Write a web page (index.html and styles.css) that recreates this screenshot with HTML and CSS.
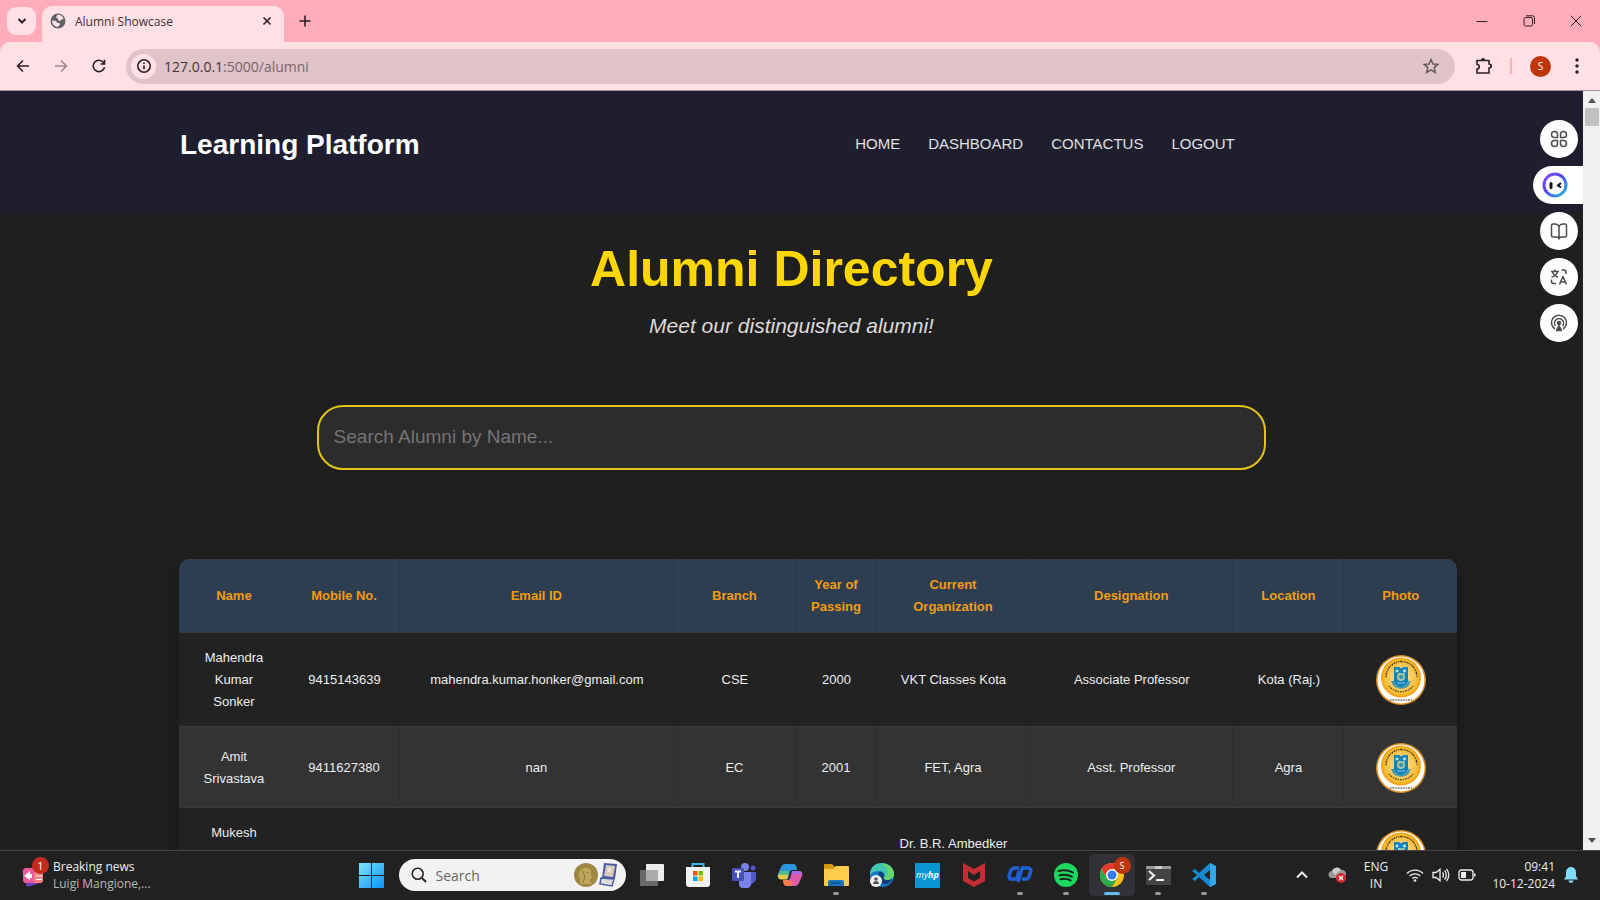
FILE: index.html
```html
<!DOCTYPE html>
<html lang="en">
<head>
<meta charset="utf-8">
<title>Alumni Showcase</title>
<link rel="stylesheet" href="styles.css">
</head>
<body>
<svg class="defs" aria-hidden="true">
  <defs>
    <radialGradient id="gold" cx=".5" cy=".5" r=".5"><stop offset="0" stop-color="#f8e3a4"/><stop offset=".6" stop-color="#f7cd68"/><stop offset="1" stop-color="#f9b41c"/></radialGradient>
    <linearGradient id="win" x1="0" y1="0" x2="1" y2="1"><stop offset="0" stop-color="#7fe6ff"/><stop offset="1" stop-color="#0a91f5"/></linearGradient>
    <linearGradient id="ring" x1="0" y1="0" x2="1" y2="1"><stop offset="0" stop-color="#8a4df0"/><stop offset=".45" stop-color="#5146e8"/><stop offset="1" stop-color="#27c0e6"/></linearGradient>
    <symbol id="seal" viewBox="0 0 50 50">
      <circle cx="25" cy="25" r="25" fill="#d98d20"/>
      <circle cx="25" cy="25" r="23.5" fill="#fff"/>
      <circle cx="25" cy="22.5" r="20" fill="#eda31c"/>
      <circle cx="25" cy="22.5" r="18.5" fill="url(#gold)"/>
      <path d="M10 22a15.500 15.500 0 0 1 31 0" fill="none" stroke="#3f3620" stroke-width="1.300" stroke-dasharray="1.500 .8 2 .6 1 .9"/>
      <path d="M13 31a15.500 15.500 0 0 0 24 0" fill="none" stroke="#5d4a20" stroke-width="1.300" stroke-dasharray="1.200 1 2 1"/>
      <path d="M18 12h5l2 1.500 2-1.500h5v14c0 3-3 5-7 6.500-4-1.500-7-3.500-7-6.500z" fill="#1283bd"/>
      <path d="M16.500 26c1 5 5 6.500 8.500 6.500s7.500-1.500 8.500-6.500" fill="none" stroke="#2a91b9" stroke-width="2.500" stroke-dasharray="2 .5"/>
      <circle cx="25" cy="22" r="4" fill="#9bc9a6"/><circle cx="25" cy="22" r="2" fill="#338fae"/>
      <path d="M20 15h2v2h-2zM27.500 15h2v2h-2zM22 18.500h2M27 18.500h2M21 28h8" fill="#ccebeb" stroke="#a7dae2" stroke-width=".8"/>
      <path d="M14 45h22" stroke="#777" stroke-width="1.300" stroke-dasharray="1.500 .8 2 .9"/>
    </symbol>
  </defs>
</svg>

<div class="tabstrip">
  <button class="tab-search" aria-label="Search tabs"><svg width="12" height="12" viewBox="0 0 12 12"><path d="M2.500 4 6 7.500 9.500 4" class="ink2"/></svg></button>
  <div class="tab">
    <svg width="16" height="16" viewBox="0 0 16 16"><circle cx="8" cy="8" r="7.500" fill="#5f6368"/><path d="M7 2c3-1 6 1 6.500 4l-2 .5-1.500 1.500-2-1-.5-2L6 4.500zM2 7.500l4 .5 1.500 2h2l.5 1.500-2 2.500C4.500 14 2 11 2 7.500z" fill="#fde0e5"/></svg>
    <span class="tab-title">Alumni Showcase</span>
    <button class="plain" aria-label="Close tab"><svg width="12" height="12" viewBox="0 0 12 12"><path d="m2.500 2.500 7 7M9.500 2.500l-7 7" class="ink15"/></svg></button>
  </div>
  <button class="plain new-tab" aria-label="New tab"><svg width="12" height="12" viewBox="0 0 12 12"><path d="M6 .5v11M.5 6h11" class="ink15"/></svg></button>
  <div class="window-controls">
    <button class="plain" aria-label="Minimize"><svg width="12" height="12" viewBox="0 0 12 12"><path d="M.5 6.500h11" class="ink1"/></svg></button>
    <button class="plain" aria-label="Restore"><svg width="12" height="12" viewBox="0 0 12 12"><rect x="1" y="2.500" width="8.500" height="8.500" rx="1.500" class="ink1"/><path d="M3 .8h6.500a2 2 0 0 1 2 2V9" class="ink1"/></svg></button>
    <button class="plain" aria-label="Close"><svg width="12" height="12" viewBox="0 0 12 12"><path d="m.7.7 10.600 10.600M11.300.7.7 11.300" class="ink1"/></svg></button>
  </div>
</div>

<div class="toolbar">
  <button class="plain" aria-label="Back"><svg width="14" height="14" viewBox="0 0 14 14"><path d="M13 7H1.500M7 1.500 1.500 7 7 12.500" class="ink15"/></svg></button>
  <button class="plain faded" aria-label="Forward"><svg width="14" height="14" viewBox="0 0 14 14"><path d="M1 7h11.500M7 1.500 12.500 7 7 12.500" class="ink15"/></svg></button>
  <button class="plain" aria-label="Reload"><svg width="14" height="14" viewBox="0 0 14 14"><path d="M12.500 8.200A5.700 5.700 0 1 1 11.500 3.500L12.500 5M12.500.7V5H8.500" class="ink15"/></svg></button>
  <div class="omnibox">
    <button class="site-info" aria-label="Site information"><svg width="14" height="14" viewBox="0 0 14 14"><circle cx="7" cy="7" r="6.200" class="ink15"/><path d="M7 6.300v4M7 3.500v1.500" class="ink15"/></svg></button>
    <div class="url">127.0.0.1<span>:5000/alumni</span></div>
    <button class="plain" aria-label="Bookmark"><svg width="16" height="16" viewBox="0 0 16 16"><path d="m8 1.500 2 4.500 4.900.4-3.700 3.200 1.100 4.800L8 11.900l-4.300 2.500 1.100-4.800L1.100 6.400 6 6z" class="star"/></svg></button>
  </div>
  <button class="plain" aria-label="Extensions"><svg width="18" height="18" viewBox="0 0 18 18"><path d="M2 3.500h12v3.500a1.800 1.800 0 0 1 0 4V16H2v-4a2 2 0 0 0 0-4.500z" class="ink15"/><path d="M6 3a2 2 0 0 1 4 0zM15 7a2 2 0 0 1 0 4z" fill="#2c2023"/></svg></button>
  <span class="divider"></span>
  <button class="avatar" aria-label="Profile">S</button>
  <button class="plain" aria-label="Menu"><svg width="4" height="16" viewBox="0 0 4 16" fill="#2c2023"><circle cx="2" cy="2" r="1.700"/><circle cx="2" cy="8" r="1.700"/><circle cx="2" cy="14" r="1.700"/></svg></button>
</div>

<div class="viewport">
  <div class="page">
    <header class="site-header">
      <div class="brand">Learning Platform</div>
      <nav class="site-nav"><a href="#">HOME</a><a href="#">DASHBOARD</a><a href="#">CONTACTUS</a><a href="#">LOGOUT</a></nav>
    </header>
    <main>
      <h1>Alumni Directory</h1>
      <p class="tagline">Meet our distinguished alumni!</p>
      <input class="search" type="text" aria-label="Search alumni by name" placeholder="Search Alumni by Name...">
      <div class="table-wrap">
      <table class="alumni">
        <colgroup><col class="c-name"><col class="c-mobile"><col class="c-email"><col class="c-branch"><col class="c-year"><col class="c-org"><col class="c-role"><col class="c-place"><col class="c-photo"></colgroup>
        <thead><tr><th>Name</th><th>Mobile No.</th><th>Email ID</th><th>Branch</th><th>Year of Passing</th><th>Current<br>Organization</th><th>Designation</th><th>Location</th><th>Photo</th></tr></thead>
        <tbody>
          <tr><td>Mahendra Kumar Sonker</td><td>9415143639</td><td>mahendra.kumar.honker@gmail.com</td><td>CSE</td><td>2000</td><td>VKT Classes Kota</td><td>Associate Professor</td><td>Kota (Raj.)</td><td><svg class="photo"><use href="#seal"/></svg></td></tr>
          <tr><td>Amit Srivastava</td><td>9411627380</td><td>nan</td><td>EC</td><td>2001</td><td>FET, Agra</td><td>Asst. Professor</td><td>Agra</td><td><svg class="photo"><use href="#seal"/></svg></td></tr>
          <tr><td>Mukesh Kumar Sharma</td><td>9411627271</td><td>mukeshcs2@gmail.com</td><td>EC</td><td>2002</td><td>Dr. B.R. Ambedker University</td><td>Asstt. Prof.</td><td>Agra</td><td><svg class="photo"><use href="#seal"/></svg></td></tr>
        </tbody>
      </table>
      </div>
    </main>
    <aside class="assistant">
      <button aria-label="Apps"><svg width="18" height="18" viewBox="0 0 18 18" class="tool"><path d="M4.500 1.500A3 3 0 0 1 7.500 4.500V7.500H4.500a3 3 0 0 1 0-6zM13.500 1.500a3 3 0 0 1 0 6H10.500V4.500a3 3 0 0 1 3-3zM4.500 10.500H7.500v3a3 3 0 1 1-3-3zM10.500 10.500h3a3 3 0 1 1-3 3z"/></svg></button>
      <button class="bot" aria-label="Assistant"><svg width="26" height="26" viewBox="0 0 26 26"><circle cx="13" cy="13" r="11" fill="#fff" stroke="url(#ring)" stroke-width="3"/><path d="M9 11.500v4" stroke="#111" stroke-width="3" stroke-linecap="round"/><path d="m19 11-3 2.500 3 2" fill="none" stroke="#111" stroke-width="2"/></svg></button>
      <button aria-label="Read"><svg width="18" height="18" viewBox="0 0 18 18" class="tool"><path d="M9 4.500C8 2.500 7 2 5 2H3A1.500 1.500 0 0 0 1.500 3.500v10A1.500 1.500 0 0 0 3 15h3c1.500 0 2.300.3 3 1.200.7-.9 1.500-1.200 3-1.200h3a1.500 1.500 0 0 0 1.500-1.500v-10A1.500 1.500 0 0 0 15 2h-2c-2 0-3 .5-4 2.500zv13"/></svg></button>
      <button aria-label="Translate"><svg width="18" height="18" viewBox="0 0 18 18" class="tool"><path d="M1 3.500h8M5 1.500v2M7.500 4C6.500 6.500 4 8.500 1.500 9M2.500 4c1 2.500 3.500 4.500 5.500 5M9.500 16.500l3.500-8 3.500 8M10.800 14h4.500M11.500 2h2.500a2 2 0 0 1 2 2v2M1.500 11.500v2a2 2 0 0 0 2 2H6"/></svg></button>
      <button aria-label="Podcast"><svg width="18" height="18" viewBox="0 0 18 18" class="tool"><path d="M5 15a7.500 7.500 0 1 1 8 0M5.500 12a4.500 4.500 0 1 1 7 0"/><circle cx="9" cy="9" r="1.500" fill="#4b4b50"/><path d="M9 11.500 6.500 16.500h5z" fill="#4b4b50"/></svg></button>
    </aside>
  </div>
  <div class="scrollbar">
    <svg width="8" height="5" viewBox="0 0 8 5"><path d="M0 5 4 0l4 5z" fill="#505050"/></svg>
    <div class="thumb"></div>
    <svg width="8" height="5" viewBox="0 0 8 5"><path d="M0 0h8L4 5z" fill="#505050"/></svg>
  </div>
</div>

<footer class="taskbar">
  <div class="widget">
    <svg width="28" height="32" viewBox="0 0 28 32"><path d="m2 12 5 16 13-4-2-12z" fill="#6c43c6"/><rect x="3" y="9" width="20" height="15" rx="3" fill="#ee5c9b"/><path d="M14 9h6a3 3 0 0 1 3 3v9a3 3 0 0 1-3 3h-6z" fill="#f47c80"/><path d="m4 17 6-5v9zM10 15h2v4h-2z" fill="#fff"/><path d="M16 17h6M16 20.500h6" stroke="#fff"/></svg>
    <span class="count">1</span>
    <div class="news"><strong>Breaking news</strong><span>Luigi Mangione,...</span></div>
  </div>
  <div class="apps">
    <button class="start" aria-label="Start"><svg width="25" height="25" viewBox="0 0 25 25"><path d="M0 0h12v12H0zM13 0h12v12H13zM0 13h12v12H0zM13 13h12v12H13z" fill="url(#win)"/></svg></button>
    <label class="task-search">
      <svg width="16" height="16" viewBox="0 0 16 16"><circle cx="6.700" cy="6.700" r="5.500" class="ink15"/><path d="m11 11 4 4" class="ink2"/></svg>
      <input type="text" placeholder="Search" aria-label="Search">
      <svg width="46" height="26" viewBox="0 0 46 26"><circle cx="13" cy="13" r="12" fill="#a08643"/><path d="M7 22c1-4 0-5-1-8 0-6 3-9 7-8 4 0 6 4 5 6l1 4-2 1v3l3 2z" fill="#c0a75c"/><path d="M9 8c2 2 1 4 3 6l-2 7M14 10l2 1" stroke="#88723a" fill="none"/><path d="m31 1 13 1-2 15-13-1z" fill="#4a5aa3"/><path d="m33 3 9 1-2 11-9-1z" fill="#d8cbbd"/><path d="m28 16 13 1-2 7-12-2z" fill="#dfddd8" stroke="#4a5aa3" stroke-width="1.500"/><circle cx="36.500" cy="8" r="2" fill="#eee2d4"/></svg>
    </label>
    <button aria-label="Task view"><svg width="26" height="26" viewBox="0 0 26 26"><rect x="7" y="2" width="18" height="17" rx="1" fill="#eee"/><rect x="1" y="8" width="18" height="16" rx="1" fill="#777" fill-opacity=".85"/><path d="M7 8h12v11H7z" fill="#aaa"/></svg></button>
    <button aria-label="Store"><svg width="26" height="26" viewBox="0 0 26 26"><path d="M7.500 6V2h11v4" fill="none" stroke="#35b6e6" stroke-width="2"/><path d="M1 5h24v17a3 3 0 0 1-3 3H4a3 3 0 0 1-3-3z" fill="#f2f2f2"/><path d="M8 9h4.500v4.500H8z" fill="#f25022"/><path d="M13.500 9H18v4.500h-4.500z" fill="#7fba00"/><path d="M8 14.500h4.500V19H8z" fill="#00a4ef"/><path d="M13.500 14.500H18V19h-4.500z" fill="#ffb900"/></svg></button>
    <button aria-label="Teams"><svg width="26" height="26" viewBox="0 0 26 26"><circle cx="14" cy="5" r="4" fill="#7b83eb"/><circle cx="22" cy="6" r="2.500" fill="#5059c9"/><path d="M18 10h7v7a5 5 0 0 1-7 4z" fill="#5059c9"/><path d="M8 10h12v8a6 6 0 0 1-12 5z" fill="#7b83eb"/><rect x="1" y="6" width="12" height="13" rx="1" fill="#4650b8"/><path d="M4 9.500h6M7 9.500V16" stroke="#fff" stroke-width="1.800"/></svg></button>
    <button aria-label="Copilot"><svg width="26" height="26" viewBox="0 0 26 26"><path d="M8 2h8c2 0 3 1 3.500 3l.5 3h-4c-2 0-3 1-3.500 3L11 17H5c-4 0-5-2-4-5l3-7c1-2 2-3 4-3z" fill="#2a95df"/><path d="M1.500 12h10L10 17.500H5c-3.500 0-4.500-2-3.500-5.500z" fill="#ecc846"/><path d="M3 9h9l-1 4H1.500z" fill="#5abf83"/><path d="M18 24h-8c-2 0-3-1-3.500-3L6 18h4c2 0 3-1 3.500-3L15 9h6c4 0 5 2 4 5l-3 7c-1 2-2 3-4 3z" fill="#de58ad"/><path d="M6 18h5l5 2-1 4h-5c-2 0-3-1-3.500-3z" fill="#f47d4d"/><path d="M15 9h6c3 0 4 1.500 4 3.500l-10-1z" fill="#a86be8"/></svg></button>
    <button class="open" aria-label="File Explorer"><svg width="26" height="26" viewBox="0 0 26 26"><path d="M1 3a1 1 0 0 1 1-1h7l3 3h13v8H1z" fill="#d69b12"/><path d="M1 7h9l3-3h12a1 1 0 0 1 1 1v18a1 1 0 0 1-1 1H2a1 1 0 0 1-1-1z" fill="#fccd4c"/><path d="M5 24v-4a2 2 0 0 1 2-2h12a2 2 0 0 1 2 2v4z" fill="#1876bd"/><path d="M8 21h10" stroke="#0b508c" stroke-width="1.500"/></svg></button>
    <button aria-label="Edge"><svg width="26" height="26" viewBox="0 0 26 26"><circle cx="13" cy="13" r="12" fill="#1479c4"/><path d="M1 11C2 4 7 1 13 1c7 0 12 5 12 11 0 4-3 6-7 6-3 0-4-2-3-3 2-3-1-6-5-6-4 0-7 1-9 4z" fill="#43c5b4"/><path d="M17 2c5 2 8 6 8 10 0 4-3 6-7 6-3 0-4-2-3-3 6 0 5-9-2-13z" fill="#66d76b"/><path d="M10 10c3-1 6 2 5 5-1 1 0 3 3 3 3 0 5-1 6-2-2 4-5 6-8 6-4 0-7-4-7-8z" fill="#123f75"/><circle cx="7" cy="19" r="6" fill="#eee"/><circle cx="7" cy="17" r="1.800" fill="#555"/><path d="M4 22c0-4 6-4 6 0z" fill="#555"/></svg></button>
    <button aria-label="myHP"><span class="myhp">my<b>hp</b></span></button>
    <button aria-label="McAfee"><svg width="26" height="26" viewBox="0 0 26 26"><path d="m2 1 11 6 11-6v18l-11 6-11-6zM7 9v7l6 3.500 6-3.500V9l-6 4z" fill="#c32e35" fill-rule="evenodd"/></svg></button>
    <button class="open" aria-label="Quick access"><svg width="26" height="26" viewBox="0 0 26 26"><path d="M12 6H7L4 8l-2 6 1 3h7l2-8M11 20l4-14h7l2 2-2 7-2 2h-5" fill="none" stroke="#1e60d4" stroke-width="3.500" stroke-linejoin="round"/></svg></button>
    <button class="open" aria-label="Spotify"><svg width="26" height="26" viewBox="0 0 26 26"><circle cx="13" cy="13" r="12" fill="#1ed760"/><path d="M5.500 9c5-1.500 10-1 14.500 1.500M6.500 13.300c4.500-1.200 8.500-.8 12.300 1.400M7.500 17.200c4-.8 7-.5 10 1.200" fill="none" stroke="#17251b" stroke-width="2" stroke-linecap="round"/></svg></button>
    <button class="open active" aria-label="Chrome"><svg width="26" height="26" viewBox="0 0 26 26"><circle cx="13" cy="13" r="12" fill="#fbc116"/><path d="M2.600 7A12 12 0 0 0 13 25l5.500-9H8z" fill="#2da94f"/><path d="M2.600 7 8 16l5-9h10.400A12 12 0 0 0 2.600 7z" fill="#e33b2e"/><circle cx="13" cy="13" r="6" fill="#fff"/><circle cx="13" cy="13" r="4.500" fill="#367af0"/></svg><span class="profile">S</span></button>
    <button class="open" aria-label="Terminal"><svg width="26" height="26" viewBox="0 0 26 26"><rect x="1" y="4" width="25" height="19" rx="1" fill="#444"/><path d="M1 5a1 1 0 0 1 1-1h23a1 1 0 0 1 1 1v2H1z" fill="#999"/><path d="M10 4h7v3h-7z" fill="#ccc"/><path d="m4 9 5 4.500L4 18M11 18h8" fill="none" stroke="#eee" stroke-width="2.200"/></svg></button>
    <button class="open" aria-label="Visual Studio Code"><svg width="26" height="26" viewBox="0 0 26 26"><path d="m19 1 6 3v18l-6 3L8 15l-4 4-3-2 5-4-5-4 3-2 4 4zM19 8l-6 5 6 5z" fill="#168bd2" fill-rule="evenodd"/><path d="m19 1 6 3v18l-6 3z" fill="#32a8eb"/></svg></button>
  </div>
  <div class="tray">
    <svg width="12" height="8" viewBox="0 0 12 8"><path d="m1 6.500 5-5 5 5" class="white2"/></svg>
    <svg class="cloud" width="18" height="16" viewBox="0 0 18 16"><path d="M4 11a3.500 3.500 0 0 1 0-7 5 5 0 0 1 9-1 4 4 0 0 1 2 8z" fill="#999"/><path d="M4 4a5 5 0 0 1 9-1L7 8z" fill="#ccc"/><circle cx="13" cy="11" r="5" fill="#d82630"/><path d="m11 9 4 4m0-4-4 4" stroke="#fff" stroke-width="1.300"/></svg>
    <div class="lang">ENG<br>IN</div>
    <div class="status">
      <svg width="18" height="14" viewBox="0 0 18 14"><path d="M1 5.500a11.300 11.300 0 0 1 16 0M3.700 8a7.500 7.500 0 0 1 10.600 0M6.300 10.500a3.800 3.800 0 0 1 5.400 0" class="white1"/><circle cx="9" cy="12.500" r="1.300" fill="#eee"/></svg>
      <svg width="18" height="14" viewBox="0 0 18 14"><path d="M1 4.500h3L8 1.200v11.600L4 9.500H1zM10.500 4.500a4 4 0 0 1 0 5M12.500 2.500a6.500 6.500 0 0 1 0 9M14.500 1a9 9 0 0 1 0 12" class="white1"/></svg>
      <svg width="18" height="14" viewBox="0 0 18 14"><rect x="1" y="2" width="14" height="10" rx="2.500" class="white1"/><path d="M3 4h5v6H3zM16 5.500h1.500v3H16z" fill="#eee"/></svg>
    </div>
    <div class="clock">09:41<br>10-12-2024</div>
    <svg width="14" height="18" viewBox="0 0 14 18"><path d="M7 1a5 5 0 0 1 5 5v4l2 3.500H0L2 10V6a5 5 0 0 1 5-5zM4.500 14.500h5a2.500 2.500 0 0 1-5 0z" fill="#7fdcf8"/></svg>
  </div>
</footer>
</body>
</html>
```
FILE: styles.css
```css
* { box-sizing: border-box; }
body {
  margin: 0;
  height: 100vh;
  overflow: hidden;
  display: grid;
  grid-template-columns: minmax(0, 1fr);
  grid-template-rows: auto auto minmax(0, 1fr) auto;
  font-family: "Open Sans", "Noto Sans", sans-serif;
  background: #ffacbb;
}
button { font: inherit; border: 0; padding: 0; }
svg { display: block; flex: none; }
.defs { position: absolute; width: 0; height: 0; }
.plain { background: none; }
.ink1, .ink15, .ink2 { fill: none; stroke: #2c2023; stroke-width: 1; }
.ink15 { stroke-width: 1.6; }
.ink2 { stroke-width: 2; }
.star { fill: none; stroke: #65585c; stroke-width: 1.5; }
.white1, .white2 { fill: none; stroke: #eee; stroke-width: 1.3; }
.white2 { stroke-width: 2; }

/* Browser window */
.tabstrip { display: flex; height: 42px; padding-left: 7px; background: #ffacbb; }
.tab-search { display: grid; place-items: center; width: 29px; height: 28px; margin: 7px 6px 0 0; border-radius: 9px; background: #fee0e5; }
.tab { display: flex; align-items: center; gap: 9px; width: 242px; margin-top: 6px; padding: 0 11px 6px 8px; border-radius: 10px 10px 0 0; background: #fee0e5; }
.tab-title { flex: 1; font-size: 12px; color: #3c3034; }
.new-tab { margin-left: 15px; }
.window-controls { display: flex; gap: 35px; margin-left: auto; padding-right: 18px; }
.toolbar { display: flex; align-items: center; gap: 24px; height: 49px; padding: 0 21px 0 16px; border-bottom: 1px solid #a78d9b; border-radius: 10px 10px 0 0; background: #fee0e5; }
.faded { opacity: .45; }
.omnibox { display: flex; flex: 1; align-items: center; height: 35px; margin: 0 -4px; padding: 0 16px 0 5px; border-radius: 18px; background: #e0c4ca; }
.site-info { display: grid; place-items: center; width: 25px; height: 25px; border-radius: 50%; background: #fee0e5; }
.url { flex: 1; padding-left: 8px; font-size: 14px; color: #43363a; }
.url span { color: #75656a; }
.divider { width: 2px; height: 16px; margin: 0 -6px 0 -7px; background: #ffacbb; }
.avatar { width: 21px; height: 21px; border-radius: 50%; background: #bf360c; color: #fff; font-size: 10px; }

/* Web page */
.viewport { display: flex; overflow: hidden; }
.page { position: relative; flex: 1; min-width: 0; overflow: hidden; background: #1f1f1f; font-family: "Liberation Sans", Arial, sans-serif; }
.site-header { display: flex; align-items: center; justify-content: space-between; padding: 35px 22% 48px 180px; background: #1e1e2e; }
.brand { font-size: 28px; line-height: 38px; font-weight: bold; color: #fff; }
.site-nav { display: flex; gap: 28px; line-height: 18px; padding-bottom: 2px; }
.site-nav a { font-size: 15px; color: #e0e0e0; text-decoration: none; }
h1 { margin: 25px 0 0; font-size: 50px; line-height: 64px; text-align: center; color: #ffd700; }
.tagline { margin: 11px 0 0; font-size: 21px; line-height: 28px; font-style: italic; text-align: center; color: #dcdcdc; }
.search { display: block; width: 60%; height: 65px; margin: 65px auto 0; padding: 0 15px 2px; border: 2px solid #e3c21a; border-radius: 26px; background: #2c2c2c; font-family: inherit; font-size: 19px; color: #eee; }
.search::placeholder { color: #757575; opacity: 1; }
.table-wrap { margin: 89px 126px 0 179px; border-radius: 10px; overflow: hidden; box-shadow: 0 4px 12px rgba(0, 0, 0, .3); }
.alumni { width: 100%; table-layout: fixed; border-spacing: 0; font-size: 13px; line-height: 22px; text-align: center; color: #eee; background: #222; }
.alumni th, .alumni td { height: 81px; padding: 14px 20px 13px; border-top: 1px solid #3a3a3a; overflow-wrap: anywhere; }
.alumni th { height: 73px; padding: 14px 10px; border-top-color: #333f4b; border-right: 1px solid #293848; background: #2c3e50; color: #f39c12; }
.alumni th:first-child, .alumni th:last-child { border-right: 0; }
.alumni td:nth-child(3), .alumni td:nth-child(7) { padding: 14px 14px 13px; }
.alumni tbody tr:nth-child(even) { background: #333; }
.alumni tbody tr:nth-child(even) td:nth-child(n+2):not(:last-child) { border-right: 1px solid #2e2e2e; }
.c-name { width: 8.6%; }
.c-mobile { width: 8.7%; }
.c-email { width: 21.4%; }
.c-branch { width: 9.6%; }
.c-year { width: 6.3%; }
.c-org { width: 12%; }
.c-role { width: 15.9%; }
.c-place { width: 8.7%; }
.c-photo { width: 8.8%; }
.alumni td:nth-child(2), .alumni td:nth-child(8) { padding: 14px 10px 13px; }
.photo { width: 50px; height: 50px; margin: 0 auto; }
.assistant { position: absolute; top: 29px; right: 0; display: flex; flex-direction: column; align-items: flex-end; gap: 8px; }
.assistant button { display: grid; place-items: center; width: 38px; height: 38px; margin-right: 5px; border-radius: 50%; background: #fff; }
.assistant .bot { justify-items: start; width: 50px; margin-right: 0; padding-left: 9px; border-radius: 19px 0 0 19px; }
.tool { fill: none; stroke: #4b4b50; stroke-width: 1.5; stroke-linejoin: round; }
.scrollbar { display: flex; flex-direction: column; align-items: center; width: 17px; padding: 7px 0; background: #f0f0f0; }
.thumb { width: 14px; height: 18px; margin: 5px 0 auto; background: #c1c1c1; }

/* Taskbar */
.taskbar { display: grid; grid-template-columns: 1fr auto 1fr; align-items: center; height: 50px; padding-bottom: 1px; border-top: 1px solid #444; background: #222122; color: #eee; font-size: 12px; line-height: 17px; }
.widget { position: relative; display: flex; align-items: center; gap: 4px; padding-left: 20px; }
.count { position: absolute; left: 32px; top: -1px; width: 17px; height: 17px; border-radius: 50%; background: #c42b1c; color: #fff; font-size: 11px; text-align: center; }
.news { padding-left: 1px; }
.news strong, .news span { display: block; font-weight: normal; }
.news span { color: #b9b9b9; }
.apps { display: flex; align-items: center; padding-right: 22px; }
.apps button { position: relative; display: grid; place-items: center; width: 46px; height: 42px; background: none; border-radius: 5px; }
.apps .start { width: 40px; }
.task-search { display: flex; align-items: center; width: 227px; height: 32px; margin: 0 3px 0 7px; padding: 0 7px 0 12px; border-radius: 16px; background: #f2f2f2; }
.task-search input { flex: 1; min-width: 0; padding: 0 0 0 9px; border: 0; background: none; font: inherit; font-size: 14px; }
.task-search input::placeholder { color: #666; opacity: 1; }
.open::after { content: ""; position: absolute; bottom: 1px; left: 50%; width: 6px; height: 3px; margin-left: -3px; border-radius: 2px; background: #999; }
.apps .active { background: #333135; }
.active::after { width: 16px; margin-left: -8px; background: #60bdf0; }
.profile { position: absolute; right: 4px; top: 3px; width: 17px; height: 17px; border-radius: 50%; background: #bf360c; color: #fff; font-size: 9px; }
.myhp { width: 25px; height: 25px; background: #0794d3; color: #fff; font-size: 9px; line-height: 24px; font-style: italic; }
.tray { display: flex; align-items: center; justify-content: flex-end; padding-right: 22px; text-align: center; }
.cloud { margin-left: 20px; }
.lang { width: 36px; margin: 0 12px; }
.status { display: flex; gap: 8px; }
.clock { width: 70px; margin: 0 9px; text-align: right; }
```
